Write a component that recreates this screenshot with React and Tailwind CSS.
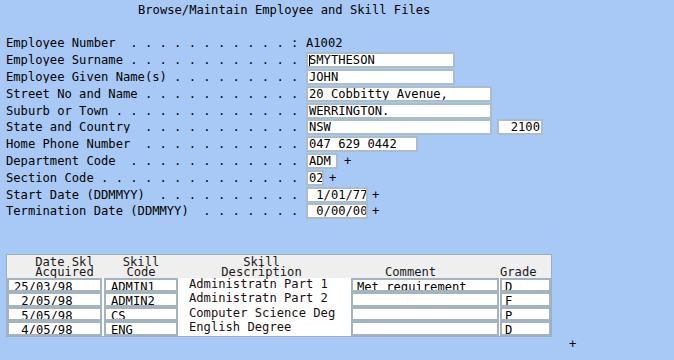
import React from 'react';

// build "Label . . . . ." with dots on odd columns up to col 39
const dotted = (label, colon = false) => {
  const chars = label.split('');
  for (let c = label.length; c < 41; c++) {
    if (c > label.length && c % 2 === 1 && c <= 39) chars.push('.');
    else chars.push(' ');
  }
  if (colon) chars[39] = ':';
  return chars.join('');
};

const Field = ({ w, children, right, cursor }) => (
  <div
    className={`relative h-[16px] border-2 border-[#abbccb] bg-white pl-[1px] pr-[1px] leading-[12px] whitespace-pre overflow-hidden ${right ? 'text-right' : ''}`}
    style={{ width: w }}
  >
    {cursor && <span className="absolute left-[1px] top-[1px] h-[11px] border-l border-black"></span>}
    {children}
  </div>
);

const Plus = ({ ml = 'ml-[5px]' }) => <span className={`${ml} leading-[12px]`}>+</span>;

const Row = ({ label, colon, children }) => (
  <div className="flex items-center h-[16.8px]">
    <div className="w-[306px] shrink-0 pl-[6px] whitespace-pre leading-[12px] overflow-hidden">{dotted(label, colon)}</div>
    {children}
  </div>
);

const skills = [
  { date: '25/03/98', code: 'ADMIN1', desc: 'Administratn Part 1', comment: 'Met requirement', grade: 'D' },
  { date: ' 2/05/98', code: 'ADMIN2', desc: 'Administratn Part 2', comment: '', grade: 'F' },
  { date: ' 5/05/98', code: 'CS', desc: 'Computer Science Deg', comment: '', grade: 'P' },
  { date: ' 4/05/98', code: 'ENG', desc: 'English Degree', comment: '', grade: 'D' },
];

const Cell = ({ w, pl, children }) => (
  <div
    className="h-full border-2 border-[#a3b4bf] bg-white leading-[12px] pt-[1px] whitespace-pre overflow-hidden"
    style={{ width: w, paddingLeft: pl }}
  >
    {children}
  </div>
);

export default function App() {
  return (
    <div
      className="w-[674px] h-[360px] overflow-hidden bg-[#a8c9f5] text-black text-[12.15px]"
      style={{ fontFamily: '"DejaVu Sans Mono", "Liberation Mono", monospace' }}
    >
      {/* title */}
      <div className="h-[35px] pl-[138px] pt-[3px] leading-[14px] whitespace-pre">
        Browse/Maintain Employee and Skill Files
      </div>

      {/* employee form */}
      <div className="flex flex-col">
        <Row label="Employee Number" colon>
          <span className="leading-[12px]">A1002</span>
        </Row>
        <Row label="Employee Surname">
          <Field w={149} cursor>SMYTHESON</Field>
        </Row>
        <Row label="Employee Given Name(s)">
          <Field w={149}>JOHN</Field>
        </Row>
        <Row label="Street No and Name">
          <Field w={186}>20 Cobbitty Avenue,</Field>
        </Row>
        <Row label="Suburb or Town">
          <Field w={186}>WERRINGTON.</Field>
        </Row>
        <Row label="State and Country">
          <Field w={186}>NSW</Field>
          <div className="ml-[5px]">
            <Field w={46} right>2100</Field>
          </div>
        </Row>
        <Row label="Home Phone Number">
          <Field w={112}>047 629 0442</Field>
        </Row>
        <Row label="Department Code">
          <Field w={32}>ADM</Field>
          <Plus ml="ml-[6px]" />
        </Row>
        <Row label="Section Code">
          <Field w={18}>02</Field>
          <Plus />
        </Row>
        <Row label="Start Date (DDMMYY)">
          <Field w={62}>{' 1/01/77'}</Field>
          <Plus ml="ml-[4px]" />
        </Row>
        <Row label="Termination Date (DDMMYY)">
          <Field w={62}>{' 0/00/00'}</Field>
          <Plus ml="ml-[4px]" />
        </Row>
      </div>

      {/* skills table */}
      <div className="ml-[6px] mt-[34px] w-[546px] h-[83px] border border-[#9fb0bc] bg-white flex flex-col">
        <div className="h-[24px] bg-[#efefef] flex text-[#1a1a1a] leading-[10.5px] pt-[2px] whitespace-pre">
          <div className="w-[95px] pl-[20px] text-center">{'Date Skl\nAcquired'}</div>
          <div className="w-[2px]"></div>
          <div className="w-[74px] text-center">{'Skill\nCode'}</div>
          <div className="w-[173px] pr-[6px] text-center">{'Skill\nDescription'}</div>
          <div className="w-[148px] pl-[34px]">{'\nComment'}</div>
          <div className="w-[1px]"></div>
          <div className="w-[51px]">{'\nGrade'}</div>
        </div>
        <div className="flex-1 flex flex-col">
          {skills.map((s) => (
            <div key={s.code} className="flex h-[14.5px]">
              <Cell w={95} pl={5}>{s.date}</Cell>
              <div className="w-[2px]"></div>
              <Cell w={74} pl={5}>{s.code}</Cell>
              <div className="w-[173px] pl-[11px] whitespace-pre leading-[12px] text-[#1a1010]">{s.desc}</div>
              <Cell w={148} pl={4}>{s.comment}</Cell>
              <div className="w-[1px]"></div>
              <Cell w={51} pl={3}>{s.grade}</Cell>
            </div>
          ))}
        </div>
      </div>

      <div className="pl-[569px] pt-[1px] leading-[12px]">+</div>
    </div>
  );
}
